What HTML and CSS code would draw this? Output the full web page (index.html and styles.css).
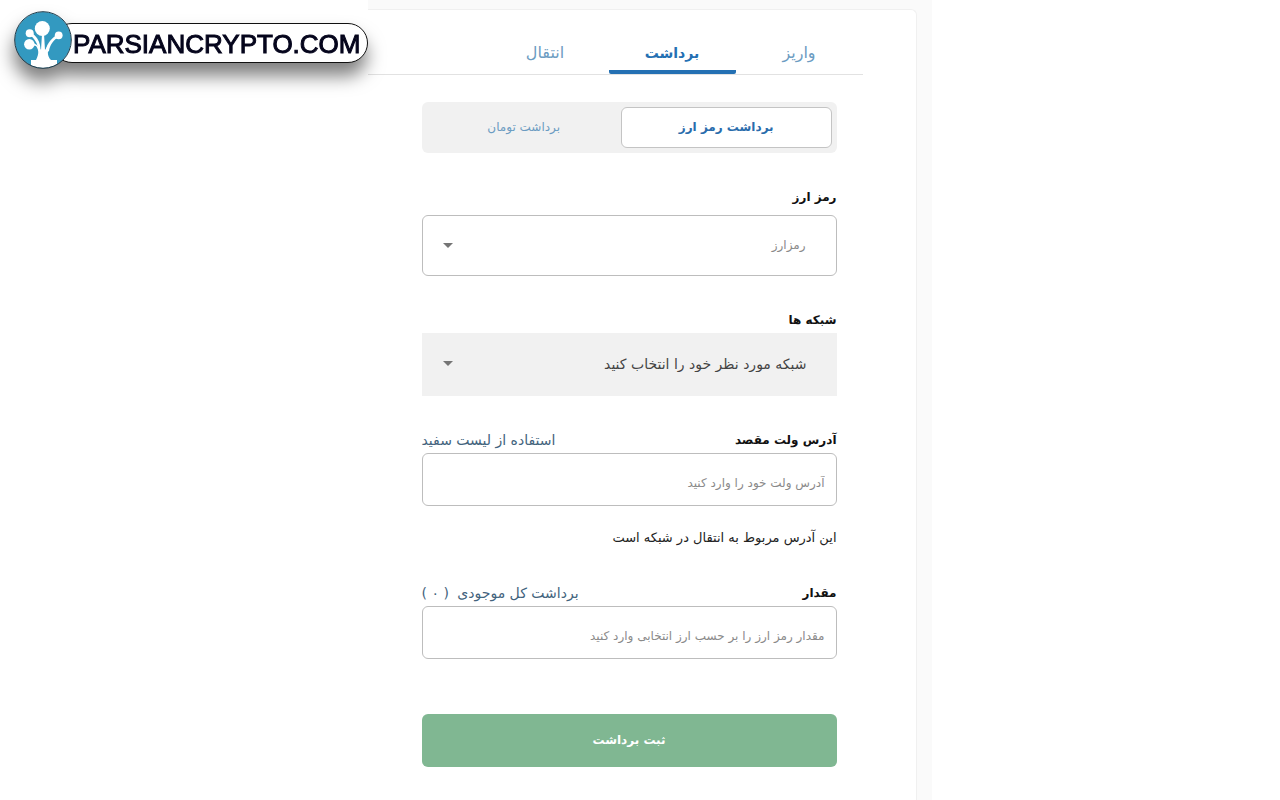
FILE: index.html
```html
<!DOCTYPE html>
<html lang="fa">
<head>
    <meta charset="UTF-8">
    <meta name="viewport" content="width=device-width, initial-scale=1.0">
    <title>برداشت رمز ارز</title>
    <link rel="stylesheet" href="styles.css">
</head>
<body>
    <div class="page">
        <header class="brand">
            <a class="brand-link" href="#">
                <svg class="brand-logo" viewBox="0 0 58 58" aria-hidden="true">
                    <defs>
                        <clipPath id="disc"><circle cx="29" cy="29" r="28"/></clipPath>
                    </defs>
                    <circle cx="29" cy="29" r="28" fill="#3399c0"/>
                    <g clip-path="url(#disc)" fill="#fff">
                        <path d="M17 58v-9h5c3-6 3-10 0-14l-5-1 1-3 5 3 4 5 1-16h2l1 16 4-6 1 1c-3 6-3 11 1 15h6v9z"/>
                        <path d="M15 23l3-1c4 3 7 7 8 12l1 8-3-3c0-6-3-11-9-16z"/>
                        <path d="M43 24l2 2c-6 3-9 8-10 14l-4 3c1-9 5-15 12-19z"/>
                        <circle cx="28.300" cy="17.500" r="7.500"/>
                        <circle cx="15.700" cy="22.200" r="4"/>
                        <circle cx="15.300" cy="33.300" r="5.200"/>
                        <circle cx="44.700" cy="24.300" r="3.900"/>
                    </g>
                    <circle cx="29" cy="29" r="28.300" fill="none" stroke="#1b3a4a" stroke-width="1"/>
                </svg>
                <span class="brand-name">PARSIANCRYPTO.COM</span>
            </a>
        </header>

        <main class="panel" dir="rtl">
            <div class="card">
                <nav class="tabs">
                    <a class="tab" href="#">واریز</a>
                    <a class="tab active" href="#">برداشت</a>
                    <a class="tab" href="#">انتقال</a>
                </nav>

                <form class="withdraw-form">
                    <div class="switch">
                        <button type="button" class="switch-item active">برداشت رمز ارز</button>
                        <button type="button" class="switch-item">برداشت تومان</button>
                    </div>

                    <div class="field">
                        <div class="field-head">
                            <label for="coin">رمز ارز</label>
                        </div>
                        <div class="select-box outlined">
                            <select id="coin">
                                <option>رمزارز</option>
                            </select>
                            <svg class="arrow" viewBox="0 0 10 5" aria-hidden="true"><path d="M0 0h10L5 5z"/></svg>
                        </div>
                    </div>

                    <div class="field">
                        <div class="field-head">
                            <label for="network">شبکه ها</label>
                        </div>
                        <div class="select-box">
                            <select id="network">
                                <option>شبکه مورد نظر خود را انتخاب کنید</option>
                            </select>
                            <svg class="arrow" viewBox="0 0 10 5" aria-hidden="true"><path d="M0 0h10L5 5z"/></svg>
                        </div>
                    </div>

                    <div class="field">
                        <div class="field-head">
                            <label for="address">آدرس ولت مقصد</label>
                            <a href="#">استفاده از لیست سفید</a>
                        </div>
                        <input type="text" id="address" placeholder="آدرس ولت خود را وارد کنید">
                        <p class="note">این آدرس مربوط به انتقال در شبکه است</p>
                    </div>

                    <div class="field">
                        <div class="field-head">
                            <label for="amount">مقدار</label>
                            <a href="#">برداشت کل موجودی <span class="balance">( ۰ )</span></a>
                        </div>
                        <input type="text" id="amount" placeholder="مقدار رمز ارز را بر حسب ارز انتخابی وارد کنید">
                    </div>

                    <button type="submit" class="submit">ثبت برداشت</button>
                </form>
            </div>
        </main>
    </div>
</body>
</html>
```
FILE: styles.css
```css
* {
    box-sizing: border-box;
}

body {
    margin: 0;
    background-color: #fff;
    font-family: "DejaVu Sans", sans-serif;
    font-size: 14px;
    color: #222;
}

a {
    text-decoration: none;
}

input,
select,
button {
    font-family: inherit;
    font-size: inherit;
    margin: 0;
}

.page {
    display: flex;
    min-height: 100vh;
}

/* logo */
.brand {
    position: relative;
    z-index: 1;
    flex: none;
    padding: 11px 0 0 14px;
}

.brand-link {
    display: flex;
    align-items: flex-end;
    filter: drop-shadow(-1px 13px 9px rgba(0, 0, 0, 0.5));
}

.brand-logo {
    width: 58px;
    height: 58px;
    position: relative;
    z-index: 1;
}

.brand-name {
    height: 40px;
    margin: 0 0 6px -20px;
    padding: 0 6px 0 20px;
    border: 1px solid #111;
    border-radius: 20px;
    background-color: #fff;
    color: #05051c;
    font-family: "Liberation Sans", Arial, sans-serif;
    font-size: 26px;
    line-height: 40px;
    -webkit-text-stroke: 1px #05051c;
}

/* panel */
.panel {
    flex: 1;
    display: flex;
    max-width: 564px;
    padding: 9px 15px 0 0;
    background-color: #fafafa;
}

.card {
    flex: 1;
    border: 1px solid #f0f0f0;
    border-width: 1px 1px 0 0;
    border-radius: 0 6px 0 0;
    background-color: #fff;
}

.tabs {
    display: flex;
    margin-right: 53px;
    padding-top: 19px;
    border-bottom: 1px solid #e2e2e2;
}

.tab {
    width: 127px;
    height: 45px;
    border-bottom: 4px solid transparent;
    color: #6c9cc2;
    font-size: 16px;
    line-height: 48px;
    text-align: center;
}

.tab.active {
    border-color: #2470b3;
    border-radius: 2px;
    color: #2470b3;
    font-size: 14px;
    font-weight: bold;
}

/* form */
.withdraw-form {
    margin: 27px 79px 0 54px;
}

.switch {
    display: flex;
    height: 51px;
    padding: 5px;
    border-radius: 6px;
    background-color: #f1f1f1;
}

.switch-item {
    flex: 1;
    padding: 0 0 2px;
    border: 1px solid transparent;
    border-radius: 6px;
    background: none;
    color: #6c9cc2;
    font-size: 12px;
    cursor: pointer;
}

.switch-item.active {
    flex: 0 0 52%;
    border-color: #c4c4c4;
    background-color: #fff;
    color: #2a6cac;
    font-weight: bold;
}

.field {
    margin-top: 32px;
}

.field-head {
    display: flex;
    justify-content: space-between;
    height: 25px;
    line-height: 25px;
}

.field-head label {
    color: #111;
    font-size: 12px;
    font-weight: bold;
}

.field-head a {
    color: #43637d;
}

.balance {
    margin-right: 4px;
}

.select-box {
    position: relative;
}

.select-box select {
    display: block;
    width: 100%;
    height: 63px;
    padding: 0 30px 2px;
    border: none;
    border-radius: 0;
    appearance: none;
    background-color: #f1f1f1;
    color: #444;
}

.select-box.outlined {
    margin-top: 5px;
}

.select-box.outlined select {
    height: 61px;
    border: 1px solid #bdbdbd;
    border-radius: 6px;
    background-color: #fff;
    color: #8a8a8a;
    font-size: 12px;
}

.arrow {
    position: absolute;
    left: 21px;
    top: 28px;
    width: 10px;
    height: 5px;
    fill: #757575;
    pointer-events: none;
}

.field input {
    display: block;
    width: 100%;
    height: 53px;
    padding: 6px 11px 0;
    border: 1px solid #bdbdbd;
    border-radius: 6px;
    background-color: #fff;
    font-size: 12px;
}

.field input::placeholder {
    color: #8a8a8a;
    opacity: 1;
}

.note {
    margin: 20px 0 0;
    font-size: 13px;
    line-height: 23px;
}

.submit {
    display: block;
    width: 100%;
    height: 53px;
    margin-top: 55px;
    padding: 0 0 2px;
    border: none;
    border-radius: 6px;
    background-color: #80b792;
    color: #fff;
    font-size: 12px;
    font-weight: bold;
    cursor: pointer;
}
```
